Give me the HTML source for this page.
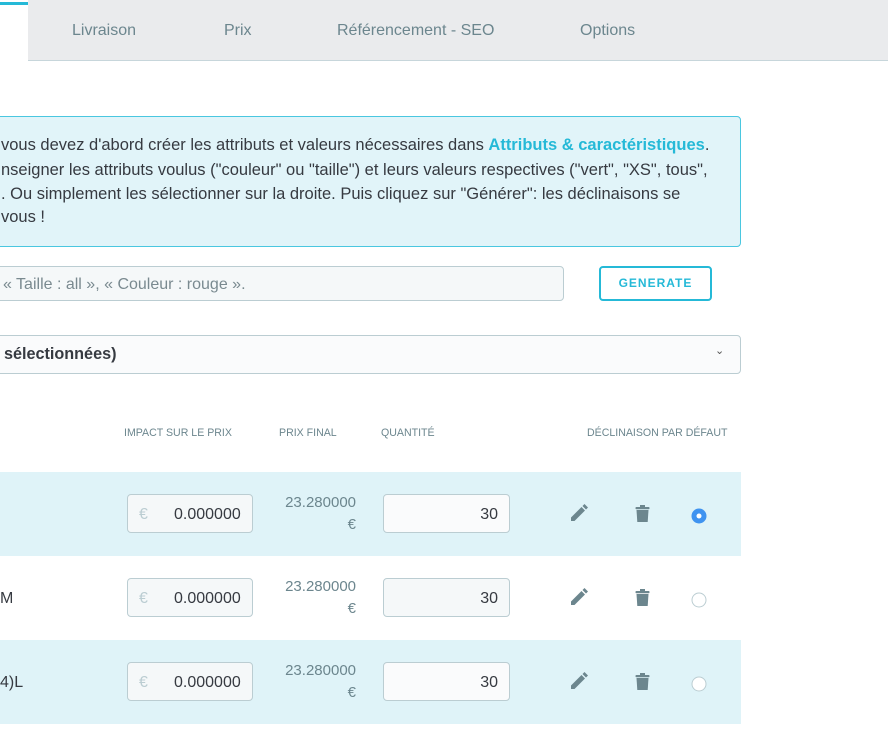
<!DOCTYPE html>
<html><head><meta charset="utf-8"><style>
*{margin:0;padding:0;box-sizing:border-box}
body{width:888px;height:750px;background:#fff;font-family:"Liberation Sans",sans-serif;color:#363a41;position:relative;overflow:hidden;font-size:14px}
.abs{position:absolute}
.tabs{left:28px;top:0;width:860px;height:61px;background:#eaebed;border-bottom:1px solid #c7d6db}
.tab{top:22px;font-size:16px;color:#6c868e}
.alert{left:-10px;top:116px;width:751px;height:131px;background:#e1f4f9;border:1px solid #4ac7e0;border-radius:4px}
.alert p{position:absolute;left:10px;font-size:16.5px;color:#363a41;white-space:nowrap}
.inp{background:#f5f8f9;border:1px solid #bbcdd2;border-radius:4px}
.hdr{top:427px;font-size:10.6px;color:#6c868e}
.row{left:0;width:741px;height:84px}
.pf{font-size:15px;color:#6c868e;text-align:right;width:80px}
.v{font-size:16px}
</style></head><body>
<div class="abs" style="left:0;top:2px;width:28px;height:3px;background:#25b9d7"></div>
<div class="abs tabs"></div>
<div class="abs tab" style="left:72px">Livraison</div>
<div class="abs tab" style="left:224px">Prix</div>
<div class="abs tab" style="left:337px">Référencement - SEO</div>
<div class="abs tab" style="left:580px">Options</div>

<div class="abs alert">
<p style="top:19px">vous devez d'abord créer les attributs et valeurs nécessaires dans <b style="color:#25b9d7">Attributs &amp; caractéristiques</b>.</p>
<p style="top:44px">nseigner les attributs voulus ("couleur" ou "taille") et leurs valeurs respectives ("vert", "XS", tous",</p>
<p style="top:68px">. Ou simplement les sélectionner sur la droite. Puis cliquez sur "Générer": les déclinaisons se</p>
<p style="top:91px">vous !</p>
</div>

<div class="abs inp" style="left:-10px;top:266px;width:574px;height:35px"></div>
<div class="abs" style="left:3px;top:276px;font-size:16px;color:#7a8a90">« Taille : all », « Couleur : rouge ».</div>
<div class="abs" style="left:599px;top:266px;width:113px;height:35px;border:2px solid #25b9d7;border-radius:4px;color:#25b9d7;font-size:12px;font-weight:bold;letter-spacing:1px;text-align:center;line-height:31px">GENERATE</div>

<div class="abs inp" style="left:-10px;top:335px;width:751px;height:39px;background:#fafbfc"></div>
<div class="abs" style="left:4px;top:345px;font-size:16.2px;font-weight:bold">sélectionnées)</div>
<div class="abs" style="left:715px;top:344px;font-size:11px;color:#555">&#8964;</div>

<div class="abs hdr" style="left:124px">IMPACT SUR LE PRIX</div>
<div class="abs hdr" style="left:279px">PRIX FINAL</div>
<div class="abs hdr" style="left:381px">QUANTITÉ</div>
<div class="abs hdr" style="left:587px">DÉCLINAISON PAR DÉFAUT</div>

<div class="abs row" style="top:472px;background:#dff3f8"></div>
<div class="abs row" style="top:556px;background:#fff"></div>
<div class="abs row" style="top:640px;background:#dff3f8"></div>

<div class="abs v" style="left:0;top:590px">M</div>
<div class="abs v" style="left:0;top:674px">4)L</div>

<div class="abs inp" style="left:127px;top:494px;width:126px;height:39px"></div>
<div class="abs inp" style="left:127px;top:578px;width:126px;height:39px"></div>
<div class="abs inp" style="left:127px;top:662px;width:126px;height:39px"></div>
<div class="abs v" style="left:139px;top:506px;color:#bbcdd2">€</div>
<div class="abs v" style="left:139px;top:590px;color:#bbcdd2">€</div>
<div class="abs v" style="left:139px;top:674px;color:#bbcdd2">€</div>
<div class="abs v" style="left:174px;top:506px">0.000000</div>
<div class="abs v" style="left:174px;top:590px">0.000000</div>
<div class="abs v" style="left:174px;top:674px">0.000000</div>

<div class="abs pf" style="left:276px;top:492px;line-height:22px">23.280000<br>€</div>
<div class="abs pf" style="left:276px;top:576px;line-height:22px">23.280000<br>€</div>
<div class="abs pf" style="left:276px;top:660px;line-height:22px">23.280000<br>€</div>

<div class="abs inp v" style="left:383px;top:494px;width:127px;height:39px;background:#fafbfc;text-align:right;padding:11px 11px">30</div>
<div class="abs inp v" style="left:383px;top:578px;width:127px;height:39px;text-align:right;padding:11px 11px">30</div>
<div class="abs inp v" style="left:383px;top:662px;width:127px;height:39px;background:#fafbfc;text-align:right;padding:11px 11px">30</div>

<svg class="abs" style="left:0;top:0" width="888" height="750">
<g fill="#6c868e">
<g id="ic"><path d="M571 521 l0-3.5 10.5-10.5 3.5 3.5 -10.5 10.5z M582.5 506 l2-2 3.5 3.5 -2 2z"/>
<rect x="635.5" y="507" width="14" height="2.2" rx="0.8"/><rect x="640" y="505" width="5" height="2"/><path d="M636.5 510h12l-0.8 12h-10.4z"/></g>
<use href="#ic" y="84"/><use href="#ic" y="168"/>
</g>
<circle cx="699" cy="516" r="7.5" fill="#3f93f0"/><circle cx="699" cy="516" r="2.5" fill="#fff"/>
<circle cx="699" cy="600" r="7" fill="#fff" stroke="#bbcdd2"/>
<circle cx="699" cy="684" r="7" fill="#fff" stroke="#bbcdd2"/>
</svg>
</body></html>
